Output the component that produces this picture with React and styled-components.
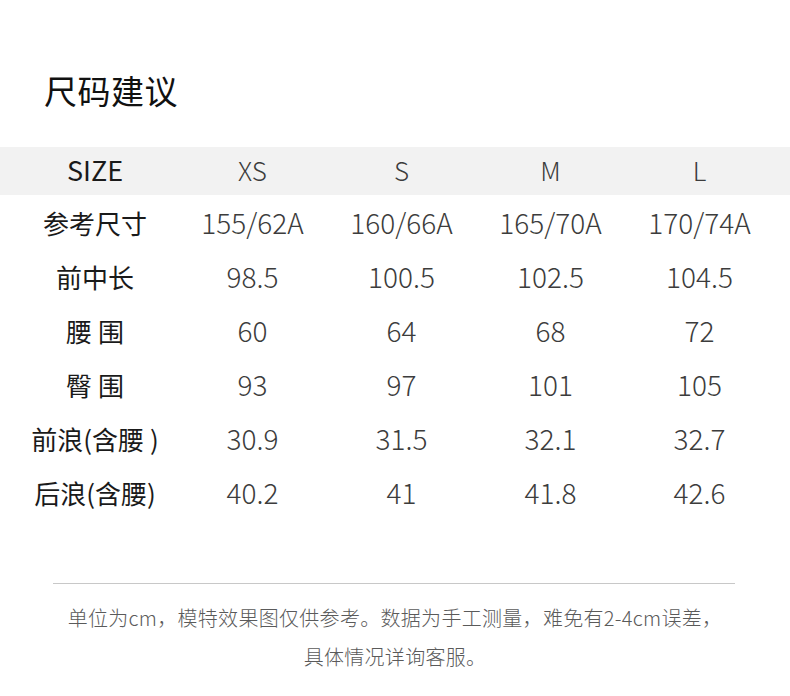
import React from 'react';
import styled, { createGlobalStyle } from 'styled-components';

const GlobalStyle = createGlobalStyle`
    html, body {
        margin: 0;
        padding: 0;
        background: #fff;
    }
    body {
        font-family: 'Noto Sans CJK SC', 'Noto Sans', sans-serif;
        color: #222;
    }
`;

const Page = styled.div`
    width: 790px;
    height: 696px;
    overflow: hidden;
    background: #fff;
`;

const Title = styled.h1`
    margin: 0;
    padding: 74px 0 0 44px;
    height: 147px;
    box-sizing: border-box;
    font-size: 33px;
    line-height: 33px;
    font-weight: 400;
    color: #111;
    letter-spacing: 0.5px;
`;

const Table = styled.div`
    display: flex;
    flex-direction: column;
`;

const Row = styled.div`
    display: grid;
    grid-template-columns: 166px repeat(4, 149px);
    padding: 0 0 4px 12px;
    box-sizing: border-box;
    align-items: center;
    height: ${p => (p.$head ? '48px' : '54px')};
    margin-bottom: ${p => (p.$head ? '2px' : '0')};
    background: ${p => (p.$head ? '#f2f2f2' : 'transparent')};
`;

const Label = styled.div`
    text-align: center;
    font-size: ${p => (p.$head ? '27px' : '26px')};
    font-weight: 400;
    color: #1a1a1a;
    white-space: pre;
`;

const Cell = styled.div`
    text-align: center;
    font-family: 'Noto Sans CJK SC Light', 'Noto Sans CJK SC DemiLight', 'Noto Sans CJK SC', sans-serif;
    font-size: ${p => (p.$head ? '26px' : '28px')};
    font-weight: 300;
    color: #3c3c3c;
`;

const Divider = styled.div`
    margin: 62px 55px 0 53px;
    height: 1px;
    background: #c8c8c8;
`;

const Notes = styled.div`
    padding-top: 14px;
`;

const Note = styled.p`
    margin: 0;
    text-align: center;
    font-size: 20px;
    line-height: 39px;
    font-weight: 300;
    color: #5a5a5a;
    letter-spacing: 0.3px;
`;

const sizes = ['XS', 'S', 'M', 'L'];

const rows = [
    { name: '参考尺寸', values: ['155/62A', '160/66A', '165/70A', '170/74A'] },
    { name: '前中长', values: ['98.5', '100.5', '102.5', '104.5'] },
    { name: '腰 围', values: ['60', '64', '68', '72'] },
    { name: '臀 围', values: ['93', '97', '101', '105'] },
    { name: '前浪(含腰 )', values: ['30.9', '31.5', '32.1', '32.7'] },
    { name: '后浪(含腰)', values: ['40.2', '41', '41.8', '42.6'] },
];

export default function App() {
    return (
        <Page>
            <GlobalStyle />
            <Title>尺码建议</Title>
            <Table>
                <Row $head>
                    <Label $head>SIZE</Label>
                    {sizes.map(s => <Cell $head key={s}>{s}</Cell>)}
                </Row>
                {rows.map(r => (
                    <Row key={r.name}>
                        <Label>{r.name}</Label>
                        {r.values.map((v, i) => <Cell key={i}>{v}</Cell>)}
                    </Row>
                ))}
            </Table>
            <Divider />
            <Notes>
                <Note>单位为cm，模特效果图仅供参考。数据为手工测量，难免有2-4cm误差，</Note>
                <Note>具体情况详询客服。</Note>
            </Notes>
        </Page>
    );
}
